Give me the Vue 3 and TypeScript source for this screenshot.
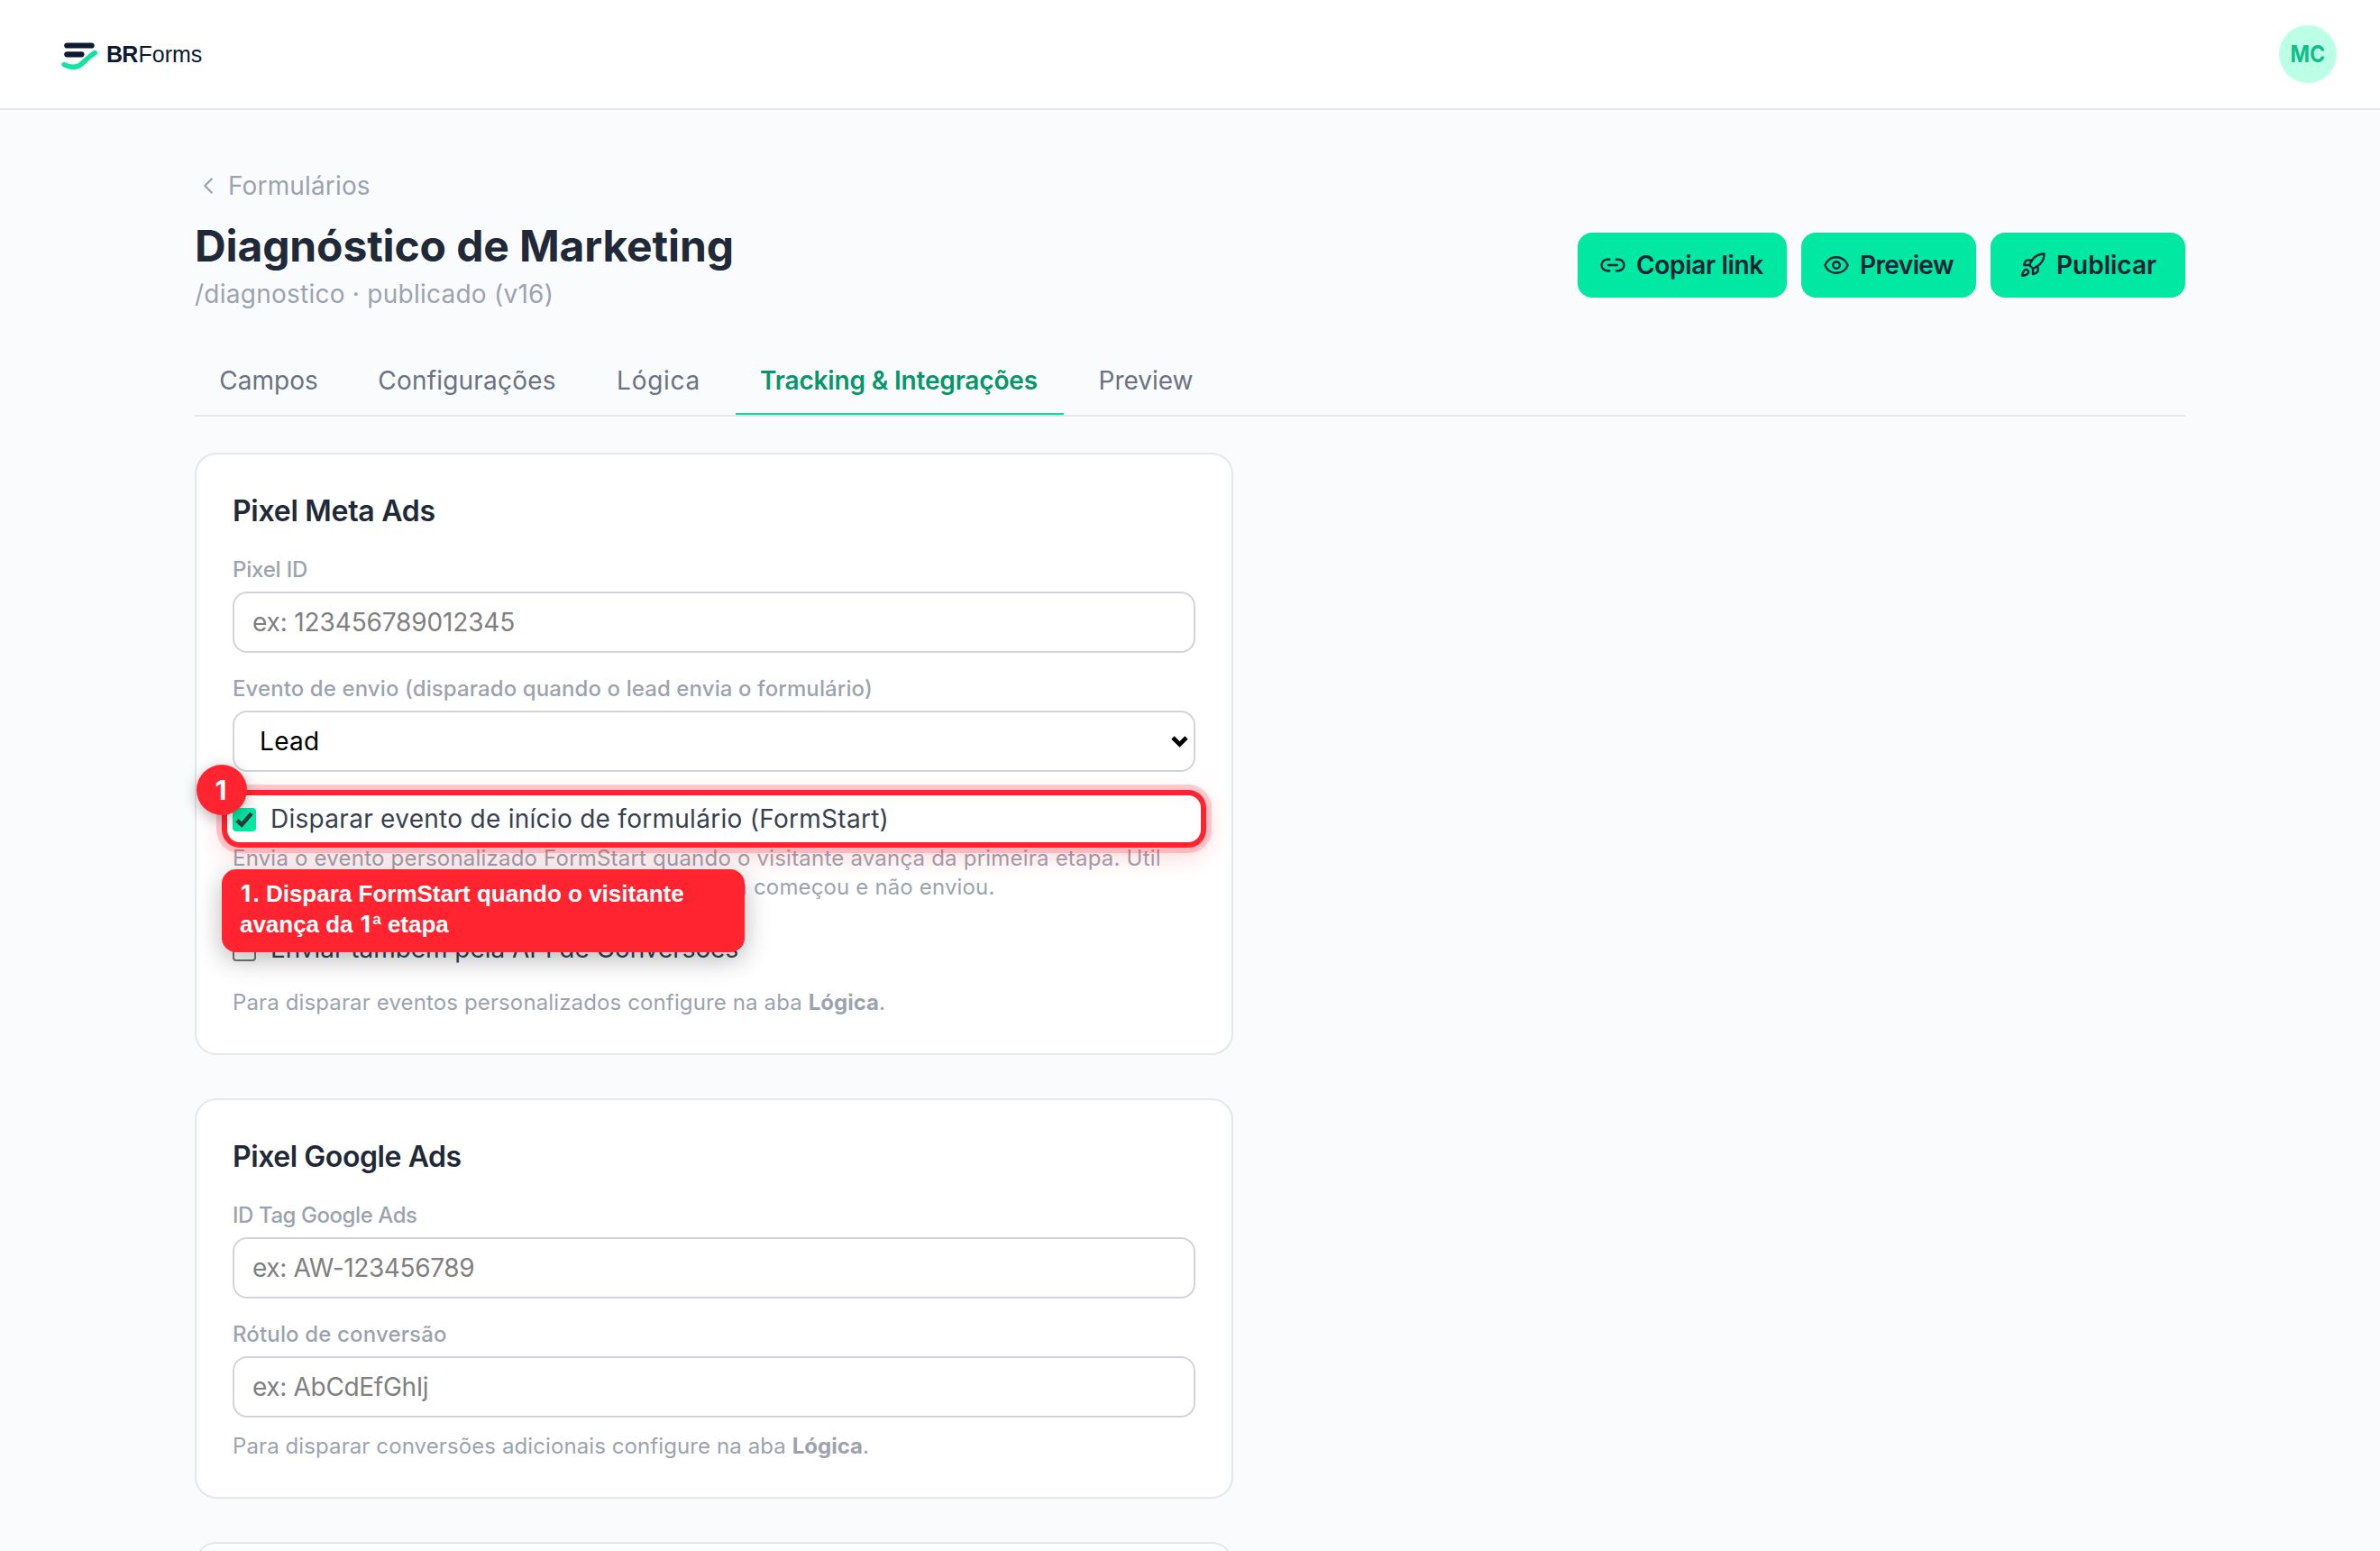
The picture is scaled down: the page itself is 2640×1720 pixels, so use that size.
<script setup lang="ts">
import { ref } from 'vue'

interface Tab {
  id: string
  label: string
}

const tabs: Tab[] = [
  { id: 'campos', label: 'Campos' },
  { id: 'config', label: 'Configurações' },
  { id: 'logica', label: 'Lógica' },
  { id: 'tracking', label: 'Tracking & Integrações' },
  { id: 'preview', label: 'Preview' },
]

const activeTab = ref('tracking')
const submitEvent = ref('Lead')
const metaPixelId = ref('')
const googleTag = ref('')
const conversionLabel = ref('')
</script>

<template>
  <div class="page">
    <header class="topbar">
      <div class="brand">
        <svg class="brand-mark" width="42" height="34" viewBox="0 0 42 34" fill="none" stroke-linecap="round">
          <path d="M6.3 4.5H33.6" stroke="#0b1b33" stroke-width="6.2" />
          <path d="M6.3 14.3H22.4" stroke="#0b1b33" stroke-width="6.2" />
          <path d="M3.2 25.6C10 29.6 17.6 29.2 22.5 24.9C27 21 31 16.2 37.2 12.6" stroke="#10e3a2" stroke-width="5.6" />
        </svg>
        <span class="brand-name"><b>BR</b><span class="brand-rest">Forms</span></span>
      </div>
      <div class="avatar"><span>MC</span></div>
    </header>

    <main class="main">
      <a class="back">
        <svg width="30" height="30" viewBox="0 0 24 24" fill="none" stroke="currentColor" stroke-width="1.9" stroke-linecap="round" stroke-linejoin="round">
          <path d="m15 18-6-6 6-6" />
        </svg>
        <span>Formulários</span>
      </a>

      <div class="heading">
        <div>
          <h1>Diagnóstico de Marketing</h1>
          <p class="slug">/diagnostico · publicado (v16)</p>
        </div>
        <div class="actions">
          <button class="btn btn-copy">
            <svg class="icon" viewBox="0 0 24 24">
              <path d="M9 17H7A5 5 0 0 1 7 7h2" />
              <path d="M15 7h2a5 5 0 1 1 0 10h-2" />
              <path d="M8 12h8" />
            </svg>
            <span>Copiar link</span>
          </button>
          <button class="btn btn-preview">
            <svg class="icon" viewBox="0 0 24 24">
              <path d="M2.062 12.348a1 1 0 0 1 0-.696 10.75 10.75 0 0 1 19.876 0 1 1 0 0 1 0 .696 10.75 10.75 0 0 1-19.876 0" />
              <circle cx="12" cy="12" r="3" />
            </svg>
            <span>Preview</span>
          </button>
          <button class="btn btn-publish">
            <svg class="icon" viewBox="0 0 24 24">
              <path d="M4.5 16.5c-1.5 1.26-2 5-2 5s3.74-.5 5-2c.71-.84.7-2.13-.09-2.91a2.18 2.18 0 0 0-2.91-.09z" />
              <path d="m12 15-3-3a22 22 0 0 1 2-3.95A12.88 12.88 0 0 1 22 2c0 2.72-.78 7.5-6 11a22.35 22.35 0 0 1-4 2z" />
              <path d="M9 12H4s.55-3.03 2-4c1.62-1.08 5 0 5 0" />
              <path d="M12 15v5s3.03-.55 4-2c1.08-1.62 0-5 0-5" />
            </svg>
            <span>Publicar</span>
          </button>
        </div>
      </div>

      <nav class="tabs">
        <button
          v-for="tab in tabs"
          :key="tab.id"
          :class="['tab', `tab-${tab.id}`, { active: tab.id === activeTab }]"
          @click="activeTab = tab.id"
        >{{ tab.label }}</button>
      </nav>

      <section class="card">
        <h2 class="t-meta">Pixel Meta Ads</h2>
        <label class="label t-pixel">Pixel ID</label>
        <input v-model="metaPixelId" class="field p-meta" placeholder="ex: 123456789012345" />
        <label class="label t-event">Evento de envio (disparado quando o lead envia o formulário)</label>
        <div class="field select">
          <span>{{ submitEvent }}</span>
          <svg width="19" height="13" viewBox="0 0 19 13" fill="none" stroke="#000" stroke-width="4.6">
            <path d="M2 2l7.5 7.5L17 2" />
          </svg>
        </div>

        <div class="check-row first">
          <span class="checkbox checked">
            <svg width="26" height="26" viewBox="0 0 26 26" fill="none" stroke="#2c3a3c" stroke-width="4.4">
              <path d="M5 13.6l5.1 5.2L21 6" />
            </svg>
          </span>
          <span class="t-start">Disparar evento de início de formulário (FormStart)</span>
          <div class="highlight"></div>
          <div class="callout">
            <div class="callout-a"><span class="one">1</span>. Dispara FormStart quando o visitante</div>
            <div class="callout-b">avança da <span class="one">1</span>ª etapa</div>
          </div>
          <div class="badge"><span>1</span></div>
        </div>
        <p class="hint">
          <span class="hint-a">Envia o evento personalizado FormStart quando o visitante avança da primeira etapa. Útil</span>
          <span class="hint-b"><span class="hint-lead">para montar públicos de remarketing com quem</span><span>começou e não enviou.</span></span>
        </p>

        <div class="check-row second">
          <span class="checkbox"></span>
          <span class="t-api">Enviar também pela API de Conversões</span>
        </div>
        <p class="note note-meta">Para disparar eventos personalizados configure na aba <b>Lógica</b>.</p>
      </section>

      <section class="card">
        <h2 class="t-google">Pixel Google Ads</h2>
        <label class="label t-tag">ID Tag Google Ads</label>
        <input v-model="googleTag" class="field p-tag" placeholder="ex: AW-123456789" />
        <label class="label t-conv">Rótulo de conversão</label>
        <input v-model="conversionLabel" class="field p-conv" placeholder="ex: AbCdEfGhIj" />
        <p class="note note-google">Para disparar conversões adicionais configure na aba <b>Lógica</b>.</p>
      </section>

      <section class="card next"></section>
    </main>
  </div>
</template>

<style>
body {
  background: #fafbfd;
}
</style>

<style scoped>
.page,
.page * {
  box-sizing: border-box;
}
.page {
  height: 1720px;
  overflow: hidden;
  background: #fafbfd;
  color: #1f2937;
  font-family: Inter, sans-serif;
  font-size: 28px;
  line-height: 40px;
}
h1,
h2,
p {
  margin: 0;
}
button {
  font: inherit;
  border: 0;
  background: none;
}

.topbar {
  display: flex;
  justify-content: space-between;
  align-items: center;
  height: 122px;
  padding: 0 48px 0 68px;
  background: #fff;
  border-bottom: 2px solid #e5e7eb;
}
.brand {
  display: flex;
  align-items: center;
  gap: 8px;
}
.brand-mark {
  margin-top: 6px;
}
.brand-name {
  font-family: "Liberation Sans", sans-serif;
  font-size: 25px;
  color: #0b1b33;
  white-space: nowrap;
}
.brand-name b {
  letter-spacing: -0.8px;
}
.brand-rest {
  margin-left: 1px;
  letter-spacing: 0;
}
.avatar {
  display: flex;
  align-items: center;
  justify-content: center;
  width: 64px;
  height: 64px;
  border-radius: 50%;
  background: #bbffe6;
  color: #10bd88;
  font-size: 26px;
  font-weight: 700;
}
.avatar span {
  margin-top: -1px;
  transform: scaleX(0.89);
}

.main {
  padding: 64px 216px 0;
}
.back {
  display: flex;
  align-items: center;
  gap: 7px;
  width: max-content;
  color: #9ca3af;
  letter-spacing: 0.15px;
}
.heading {
  display: flex;
  align-items: center;
  justify-content: space-between;
  height: 104px;
  margin-top: 16px;
}
h1 {
  padding-top: 2px;
  font-size: 48px;
  line-height: 57px;
  font-weight: 700;
  letter-spacing: -0.13px;
}
.slug {
  margin-top: 5px;
  color: #9ca3af;
  letter-spacing: 0.25px;
}
.actions {
  display: flex;
  gap: 16px;
}
.btn {
  display: flex;
  align-items: center;
  gap: 11px;
  height: 72px;
  padding: 0 0 0 24px;
  border-radius: 16px;
  background: #00e8a2;
  color: #0a2233;
  font-weight: 600;
  white-space: nowrap;
}
.btn-copy {
  width: 232px;
  letter-spacing: -0.32px;
}
.btn-preview {
  width: 194px;
  letter-spacing: -0.6px;
}
.btn-publish {
  width: 216px;
  padding-left: 32px;
}
.icon {
  width: 30px;
  height: 30px;
  flex: none;
  fill: none;
  stroke: currentColor;
  stroke-width: 1.9;
  stroke-linecap: round;
  stroke-linejoin: round;
}

.tabs {
  display: flex;
  gap: 12px;
  height: 80px;
  margin-top: 36px;
  border-bottom: 2px solid #e5e7eb;
}
.tab {
  height: 78px;
  padding: 20px 0 16px;
  border-bottom: 2px solid transparent;
  color: #6b7280;
  text-align: center;
  white-space: nowrap;
}
.tab.active {
  border-bottom-color: #1fd1a0;
  box-shadow: 0 2px 0 #cfeee5;
  color: #059669;
  font-weight: 600;
}
.tab-campos {
  width: 164px;
}
.tab-config {
  width: 252px;
  letter-spacing: 0.2px;
}
.tab-logica {
  width: 149px;
  margin-right: -1px;
  letter-spacing: 0.7px;
}
.tab-tracking {
  width: 364px;
  padding-right: 2px;
  letter-spacing: -0.17px;
}
.tab-preview {
  width: 158px;
}

.card {
  width: 1152px;
  margin-top: 40px;
  padding: 40px;
  border: 2px solid #e5e7eb;
  border-radius: 24px;
  background: #fff;
}
.card + .card {
  margin-top: 48px;
}
.card.next {
  height: 200px;
}
h2 {
  padding-top: 1px;
  margin-bottom: 26px;
  font-size: 32px;
  line-height: 44px;
  font-weight: 600;
}
.label {
  display: block;
  margin-bottom: 7px;
  color: #9ca3af;
  font-size: 24px;
  line-height: 34px;
  font-weight: 500;
}
.field {
  display: block;
  width: 100%;
  height: 68px;
  padding: 0 20px;
  border: 2px solid #d1d5db;
  border-radius: 16px;
  background: #fff;
  font: inherit;
  outline: none;
}
.field::placeholder {
  color: #808080;
  opacity: 1;
}
.field + .label {
  margin-top: 23px;
}
.select {
  display: flex;
  align-items: center;
  justify-content: space-between;
  padding: 0 6px 0 28px;
  color: #000;
  letter-spacing: 0.3px;
}

.check-row {
  position: relative;
  display: flex;
  align-items: flex-start;
  gap: 16px;
  height: 40px;
  color: #374151;
  white-space: nowrap;
}
.check-row.first {
  margin-top: 32px;
}
.check-row.second {
  margin-top: 32px;
}
.checkbox {
  flex: none;
  width: 26px;
  height: 26px;
  margin-top: 8px;
  border: 2px solid #767676;
  border-radius: 4px;
  background: #fff;
}
.checkbox.checked {
  border: 0;
  background: #00e8a2;
}
.checkbox svg {
  display: block;
}

.highlight {
  position: absolute;
  z-index: 1;
  inset: -12px;
  border: 6px solid #ff2430;
  border-radius: 20px;
  box-shadow: 0 0 0 6px rgba(255, 36, 48, 0.22), 0 8px 28px rgba(255, 36, 48, 0.22);
}
.callout {
  position: absolute;
  z-index: 2;
  left: -12px;
  top: 76px;
  width: 580px;
  height: 92px;
  padding: 10px 20px 14px;
  border-radius: 16px;
  background: #ff2430;
  box-shadow: 0 8px 28px rgba(0, 0, 0, 0.28);
  color: #fff;
  font-family: "Liberation Sans", sans-serif;
  font-size: 26px;
  line-height: 34px;
  font-weight: 700;
}
.callout-b {
  letter-spacing: -0.03px;
}
.one {
  display: inline-block;
  width: 0.556em;
  font-family: Inter, sans-serif;
  line-height: 1;
  text-indent: -1px;
  text-align: center;
}
.badge {
  position: absolute;
  z-index: 3;
  left: -40px;
  top: -40px;
  display: flex;
  align-items: center;
  justify-content: center;
  width: 56px;
  height: 56px;
  border-radius: 50%;
  background: #ff2430;
  box-shadow: 0 4px 16px rgba(0, 0, 0, 0.3);
  color: #fff;
  font-size: 30px;
  font-weight: 700;
}
.badge span {
  margin: -1px 2px 0 0;
}

.hint {
  margin-top: 8px;
  color: #9ca3af;
  font-size: 24px;
  line-height: 32px;
  white-space: nowrap;
}
.hint-a,
.hint-b {
  display: flex;
}
.hint-a {
  letter-spacing: 0.21px;
}
.hint-b {
  gap: 7px;
  letter-spacing: 0.15px;
}
.hint-lead {
  width: 571px;
  text-align: right;
}
.note {
  color: #9ca3af;
  font-size: 24px;
  line-height: 34px;
}
.note b {
  letter-spacing: 0;
}
.note-meta {
  margin: 23px 0 -1px;
  letter-spacing: 0.13px;
}
.note-google {
  margin: 15px 0 -1px;
  letter-spacing: 0.1px;
}

.t-meta {
  letter-spacing: -0.27px;
}
.t-google {
  letter-spacing: -0.43px;
}
.t-pixel {
  letter-spacing: -0.2px;
}
.t-event {
  letter-spacing: 0.1px;
}
.t-tag {
  letter-spacing: -0.44px;
}
.t-conv {
  letter-spacing: 0.15px;
}
.t-start {
  letter-spacing: 0.28px;
}
.t-api {
  letter-spacing: -0.05px;
}
.p-meta {
  letter-spacing: -0.14px;
}
.p-tag {
  letter-spacing: -0.36px;
}
.p-conv {
  letter-spacing: -0.33px;
}
</style>
